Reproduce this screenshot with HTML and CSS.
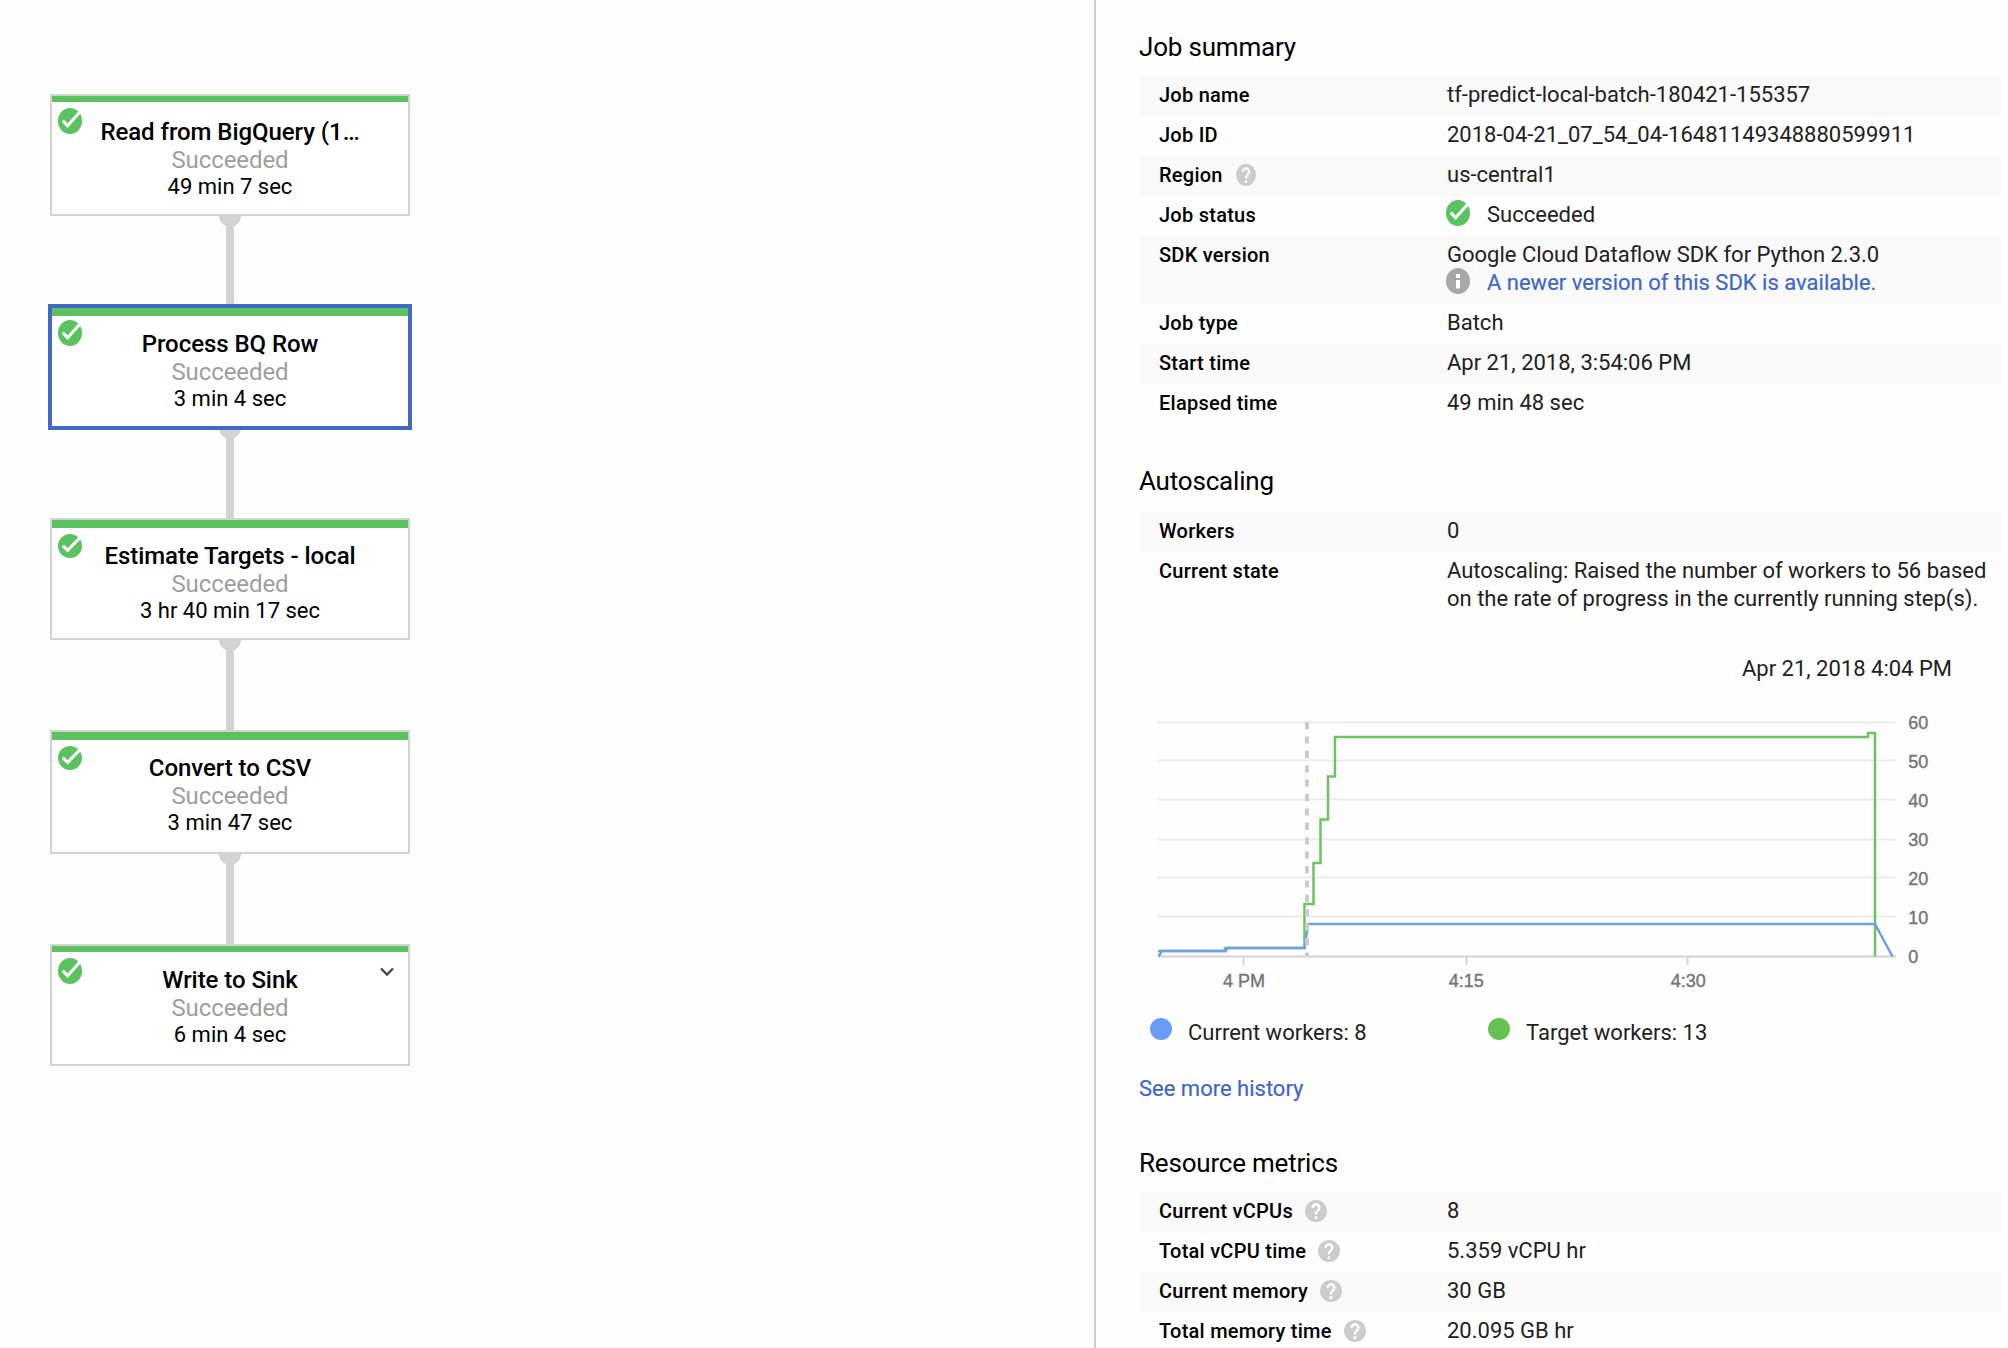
FILE: index.html
```
<!DOCTYPE html>
<html lang="en">
<head>
<meta charset="utf-8">
<title>Job details</title>
<link rel="stylesheet" href="styles.css">
</head>
<body>
<svg class="defs" aria-hidden="true">
  <symbol id="check" viewBox="0 0 24 24" preserveAspectRatio="none">
    <circle cx="12" cy="12" r="12" fill="#5ac35f"/>
    <path d="M4.8 11.6 9.6 16.4 22 3.6" fill="none" stroke="#fff" stroke-width="3"/>
  </symbol>
  <symbol id="help" viewBox="2 2 20 20" preserveAspectRatio="none">
    <circle cx="12" cy="12" r="10" fill="#ccc"/>
    <path d="M13 19h-2v-2h2zM15.07 11.25l-.9.92C13.45 12.9 13 13.5 13 15h-2v-.5c0-1.1.45-2.1 1.17-2.83l1.24-1.26c.37-.36.59-.86.59-1.41 0-1.1-.9-2-2-2s-2 .9-2 2H8c0-2.21 1.79-4 4-4s4 1.79 4 4c0 .88-.36 1.68-.93 2.25z" fill="#fff" stroke="#fff" stroke-width=".3"/>
  </symbol>
  <symbol id="info" viewBox="0 0 24 26">
    <ellipse cx="12" cy="13" rx="12" ry="13" fill="#a8a8a8"/>
    <path d="M10 6h4v4h-4zM10 12h4v8.500h-4z" fill="#fff"/>
  </symbol>
</svg>

<main class="graph">
  <section class="node">
    <svg class="node-status"><use href="#check"/></svg>
    <h3>Read from BigQuery (1…</h3><p class="state">Succeeded</p><p class="time">49 min 7 sec</p>
  </section>
  <div class="edge"></div>
  <section class="node thick selected">
    <svg class="node-status"><use href="#check"/></svg>
    <h3>Process BQ Row</h3><p class="state">Succeeded</p><p class="time">3 min 4 sec</p>
  </section>
  <div class="edge"></div>
  <section class="node thick low">
    <svg class="node-status"><use href="#check"/></svg>
    <h3>Estimate Targets - local</h3><p class="state">Succeeded</p><p class="time">3 hr 40 min 17 sec</p>
  </section>
  <div class="edge"></div>
  <section class="node thick low tall">
    <svg class="node-status"><use href="#check"/></svg>
    <h3>Convert to CSV</h3><p class="state">Succeeded</p><p class="time">3 min 47 sec</p>
  </section>
  <div class="edge"></div>
  <section class="node last">
    <svg class="node-status"><use href="#check"/></svg>
    <svg class="chevron" viewBox="0 0 14 10"><path d="M1 1.500 7 7.500 13 1.500" fill="none" stroke="#444" stroke-width="2.300"/></svg>
    <h3>Write to Sink</h3><p class="state">Succeeded</p><p class="time">6 min 4 sec</p>
  </section>
</main>

<aside class="panel">
  <h2>Job summary</h2>
  <dl class="rows">
    <div class="row"><dt>Job name</dt><dd>tf-predict-local-batch-180421-155357</dd></div>
    <div class="row"><dt>Job ID</dt><dd>2018-04-21_07_54_04-16481149348880599911</dd></div>
    <div class="row"><dt>Region<svg class="help narrow"><use href="#help"/></svg></dt><dd>us-central1</dd></div>
    <div class="row"><dt>Job status</dt><dd class="with-icon"><svg class="icon"><use href="#check"/></svg>Succeeded</dd></div>
    <div class="row"><dt>SDK version</dt><dd>Google Cloud Dataflow SDK for Python 2.3.0<div class="with-icon"><svg class="icon"><use href="#info"/></svg><a>A newer version of this SDK is available.</a></div></dd></div>
    <div class="row"><dt>Job type</dt><dd>Batch</dd></div>
    <div class="row"><dt>Start time</dt><dd>Apr 21, 2018, 3:54:06 PM</dd></div>
    <div class="row"><dt>Elapsed time</dt><dd>49 min 48 sec</dd></div>
  </dl>

  <h2 class="autoscaling">Autoscaling</h2>
  <dl class="rows">
    <div class="row"><dt>Workers</dt><dd>0</dd></div>
    <div class="row"><dt>Current state</dt><dd>Autoscaling: Raised the number of workers to 56 based<br>on the rate of progress in the currently running step(s).</dd></div>
  </dl>

  <p class="chart-time">Apr 21, 2018 4:04 PM</p>
  <svg class="chart" viewBox="1140 700 862 300">
    <path class="grid" d="M1158 722.500H1896M1158 760.500H1896M1158 799.500H1896M1158 839.500H1896M1158 877.500H1896M1158 916.500H1896"/>
    <path class="axis" d="M1158 956.500H1896M1243.500 957V965M1466.500 957V965M1687.500 957V965"/>
    <path class="line target" d="M1158 951H1225V948H1304.500V904H1313.500V863H1320.500V819.500H1328V776.500H1335V737H1868V733H1875V956.500"/>
    <path class="line current" d="M1158.500 956.500 1162 951H1225.500L1228 948H1304.500L1308 924H1875L1892.500 956.500"/>
    <path class="cursor" d="M1307 722V956"/>
    <g class="ylabels">
      <text x="1908.300" y="729">60</text><text x="1908.300" y="768">50</text><text x="1908.300" y="807">40</text><text x="1908.300" y="846">30</text><text x="1908.300" y="885">20</text><text x="1908.300" y="924">10</text><text x="1908.300" y="963">0</text>
    </g>
    <g class="xlabels">
      <text x="1244" y="986.500">4 PM</text><text x="1466.300" y="986.500">4:15</text><text x="1688.300" y="986.500">4:30</text>
    </g>
  </svg>
  <div class="legend">
    <span class="key"><i class="dot blue"></i>Current workers: 8</span>
    <span class="key"><i class="dot green"></i>Target workers: 13</span>
  </div>
  <a class="more">See more history</a>

  <h2 class="resource">Resource metrics</h2>
  <dl class="rows">
    <div class="row"><dt>Current vCPUs<svg class="help"><use href="#help"/></svg></dt><dd>8</dd></div>
    <div class="row"><dt>Total vCPU time<svg class="help"><use href="#help"/></svg></dt><dd>5.359 vCPU hr</dd></div>
    <div class="row"><dt>Current memory<svg class="help"><use href="#help"/></svg></dt><dd>30 GB</dd></div>
    <div class="row"><dt>Total memory time<svg class="help"><use href="#help"/></svg></dt><dd>20.095 GB hr</dd></div>
  </dl>
</aside>
</body>
</html>
```
FILE: styles.css
```
* { box-sizing: border-box; margin: 0; padding: 0; }
body {
  display: flex;
  width: 2008px;
  height: 1348px;
  overflow: hidden;
  background: #fefefe;
  font: 22px/28px Roboto, "Liberation Sans", sans-serif;
  color: #212121;
}
.defs { position: absolute; width: 0; height: 0; }

.graph { width: 1094px; padding: 94px 0 0 50px; }
.node {
  position: relative;
  width: 360px;
  height: 122px;
  padding-top: 22px;
  border: 2px solid #d3d3d3;
  box-shadow: inset 0 6px #5ac35f;
  background: #fff;
  text-align: center;
  color: #000;
}
.node.thick { box-shadow: inset 0 8px #5ac35f; }
.node.selected { border-color: #4069c8; box-shadow: inset 0 8px #5ac35f, 0 0 0 2px #4069c8; z-index: 1; }
.node.tall { height: 124px; }
.node.last { padding-top: 20px; }
.node h3 { font-size: 24px; font-weight: 500; line-height: 28px; letter-spacing: -.06px; }
.node .state { font-size: 24px; line-height: 28px; letter-spacing: -.08px; color: #9e9e9e; }
.node .time { line-height: 26px; }
.node-status { position: absolute; left: 6px; top: 12px; width: 24px; height: 26px; }
.low .node-status { top: 14px; height: 24px; }
.chevron { position: absolute; left: 328px; top: 20.500px; width: 14px; height: 10px; }
.edge {
  width: 360px;
  height: 90px;
  background:
    radial-gradient(circle at 180px 0, #d3d3d3 10.5px, transparent 11.2px),
    linear-gradient(#d3d3d3, #d3d3d3) 176px 0 / 8px 90px no-repeat;
}

.panel {
  flex: none;
  width: 914px;
  height: 1348px;
  padding: 31px 6px 0 44px;
  border-left: 2px solid #ccc;
}
h2 { margin: 0 0 13px -1px; font-size: 26px; line-height: 32px; font-weight: 400; letter-spacing: -.2px; color: #000; }
h2.autoscaling { margin-top: 41px; margin-bottom: 15px; }
h2.resource { margin-top: 44px; }
.row { display: grid; grid-template-columns: 288px 1fr; padding: 5px 0 7px 19px; }
.row:nth-child(odd) { background: #fafafa; }
dt { display: flex; height: 28px; font-size: 20px; font-weight: 500; letter-spacing: .25px; color: #000; }
.help { width: 22px; height: 22px; margin: 3px 0 0 12px; }
.help.narrow { width: 20px; margin-left: 13px; }
.with-icon { display: flex; gap: 17px; height: 28px; margin-left: -1px; }
.icon { width: 24px; height: 26px; margin-top: -1px; }
a { color: #3f67c6; -webkit-text-stroke: .2px #3f67c6; }

.chart-time { margin-top: 35px; padding-right: 50px; text-align: right; }
.chart { display: block; width: 862px; height: 300px; margin-top: 17px; }
.grid { stroke: #ebebeb; stroke-width: 2; }
.axis { fill: none; stroke: #d3d3d3; stroke-width: 1.8; }
.line { fill: none; stroke-width: 2.5; }
.target { stroke: #6cc461; }
.current { stroke: #6f9eec; }
.cursor { stroke: #ccc; stroke-width: 4; stroke-dasharray: 7.2; }
.chart text { font: 18px "Liberation Sans", Arial, sans-serif; fill: #757575; stroke: #757575; stroke-width: .4; }
.xlabels { text-anchor: middle; }
.legend { display: flex; margin-top: 19px; padding-left: 10px; }
.key { display: flex; gap: 16px; width: 338px; }
.dot { width: 22px; height: 22px; margin-top: -1px; border-radius: 50%; }
.blue { background: #6a9cf6; }
.green { background: #65c250; }
.more { display: block; margin: 28px 0 0 -1px; }
```
